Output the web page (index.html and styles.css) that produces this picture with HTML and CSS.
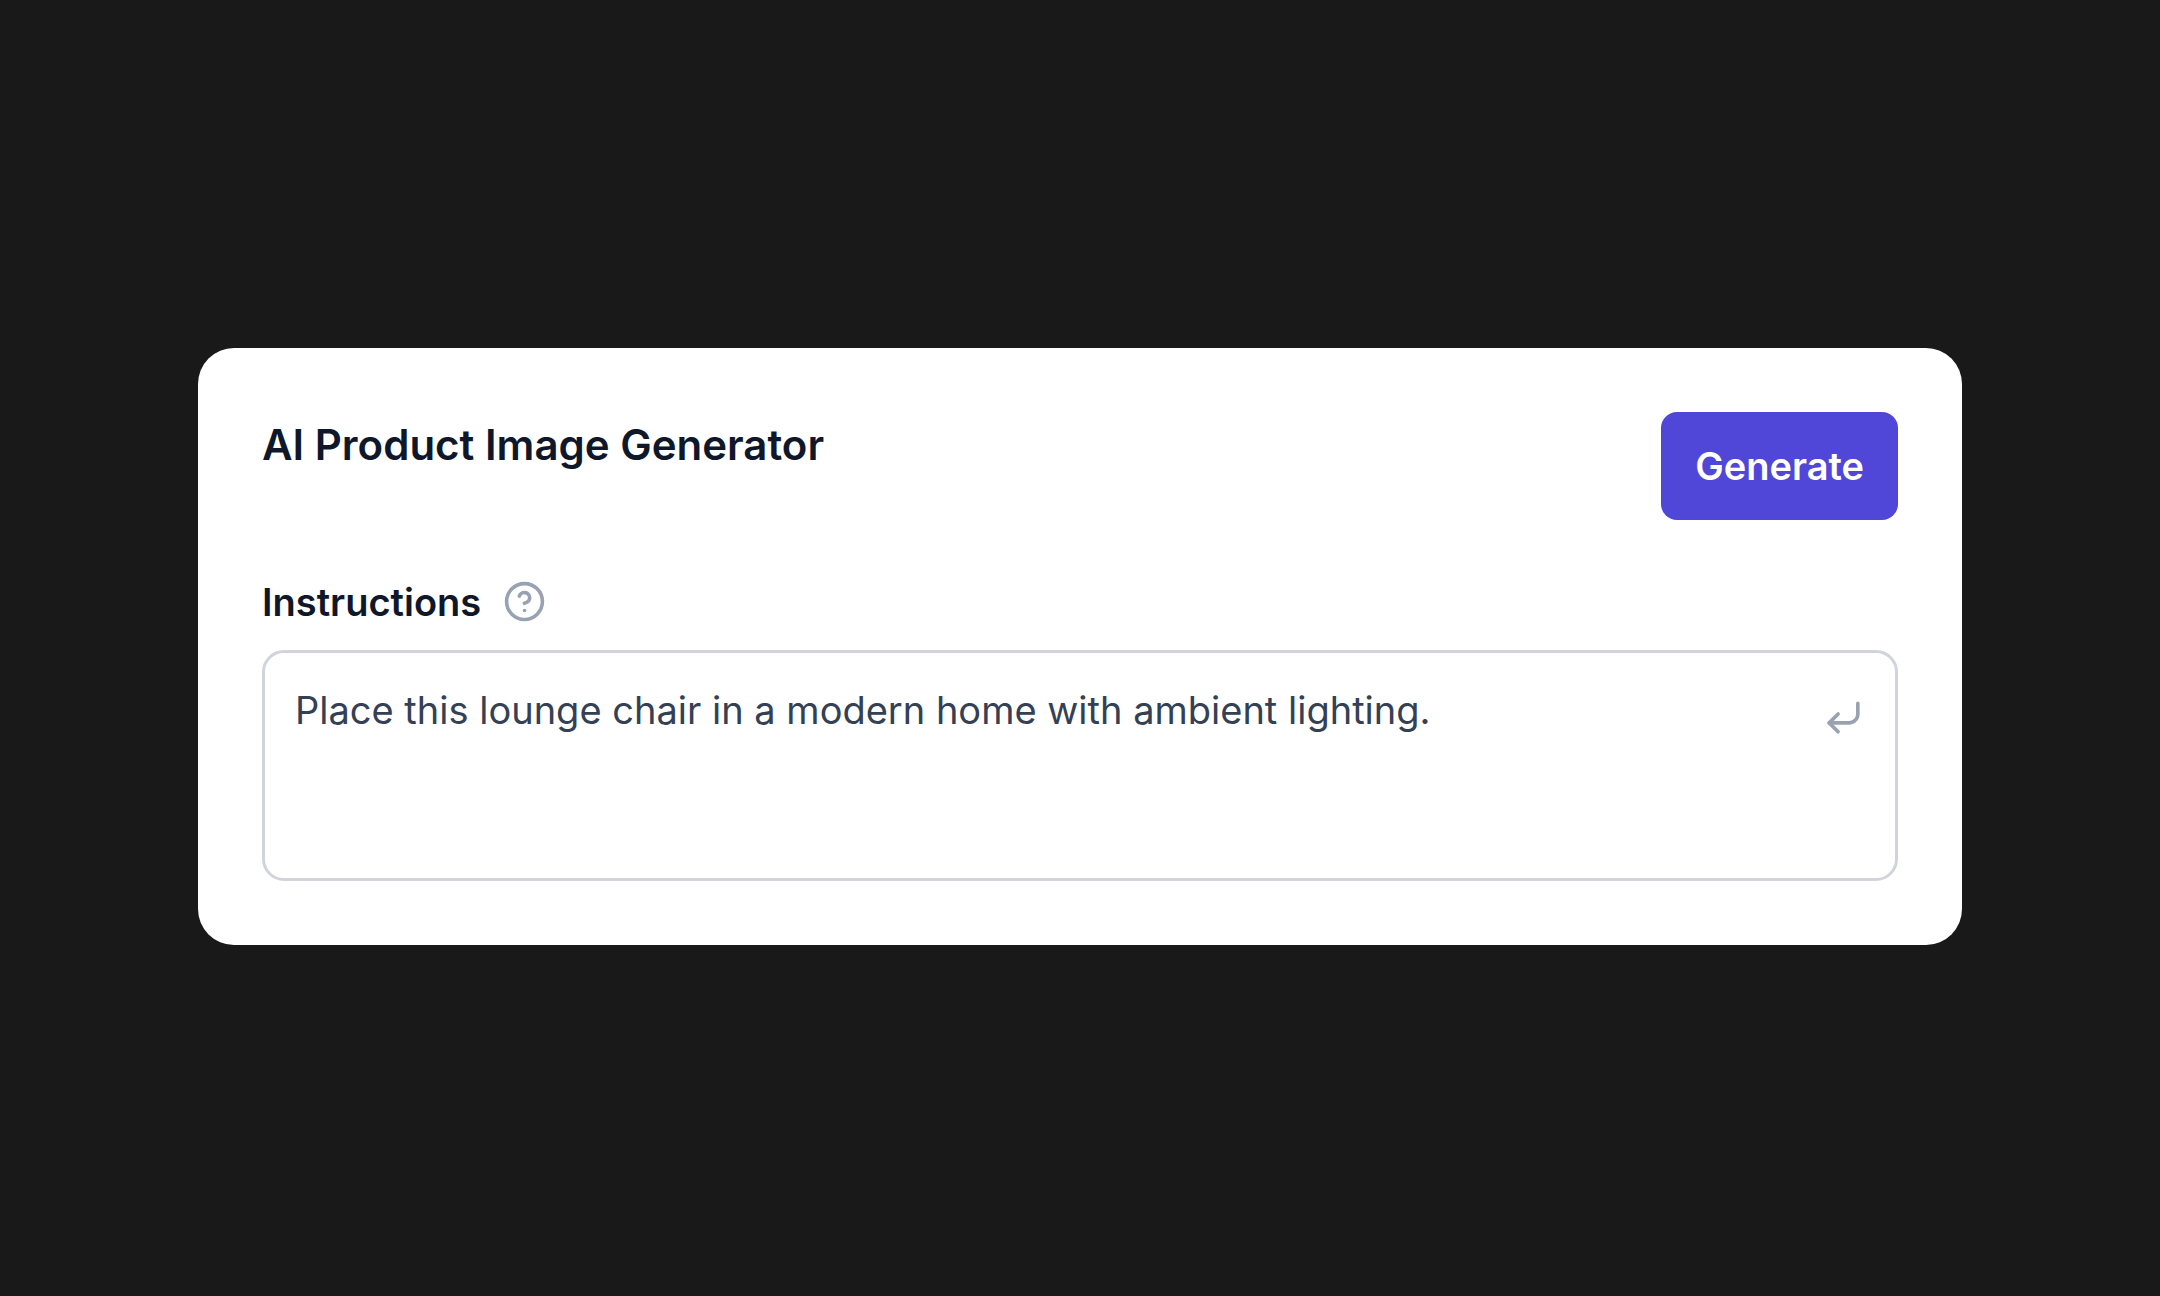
FILE: index.html
```html
<!DOCTYPE html>
<html lang="en">
<head>
    <meta charset="UTF-8">
    <meta name="viewport" content="width=device-width, initial-scale=1.0">
    <title>AI Product Image Generator</title>
    <link rel="stylesheet" href="styles.css">
</head>
<body>
    <form class="card">
        <div class="header">
            <h1>AI Product Image Generator</h1>
            <button type="button" class="generate">Generate</button>
        </div>

        <div class="label-row">
            <label for="instructions">Instructions</label>
            <svg class="help-icon" viewBox="0 0 24 24" aria-hidden="true">
                <circle cx="12" cy="12" r="10"/>
                <path d="M9.09 9a3 3 0 0 1 5.83 1c0 2-3 3-3 3"/>
                <path d="M12 17h.01"/>
            </svg>
        </div>

        <div class="input-box">
            <textarea id="instructions" rows="3" spellcheck="false">Place this lounge chair in a modern home with ambient lighting.</textarea>
            <svg class="enter-icon" viewBox="0 0 24 24" aria-hidden="true">
                <path d="M9 10l-5 5 5 5"/>
                <path d="M20 4v6a5 5 0 0 1-5 5H4"/>
            </svg>
        </div>
    </form>
</body>
</html>
```

FILE: styles.css
```css
*{
    margin: 0;
    padding: 0;
    box-sizing: border-box;
}

body{
    min-height: 100vh;
    padding: 0 198px 4px;
    display: flex;
    align-items: center;
    background-color: #19191a;
    font-family: Inter, "Liberation Sans", sans-serif;
    color: #0f172a;
}

.card{
    flex: 1;
    padding: 64px;
    border-radius: 36px;
    background-color: white;
}

.header{
    display: flex;
    justify-content: space-between;
    align-items: flex-start;
}

h1{
    font-size: 42px;
    line-height: 66px;
    font-weight: 600;
}

.generate{
    padding: 27px 34px;
    border: none;
    border-radius: 16px;
    background-color: #5046d8;
    color: white;
    font-family: inherit;
    font-size: 38px;
    line-height: 54px;
    font-weight: 600;
    cursor: pointer;
}

.label-row{
    display: flex;
    align-items: center;
    gap: 22px;
    margin: 55px 0 21px;
    font-size: 38px;
    line-height: 54px;
    font-weight: 600;
}

svg{
    flex-shrink: 0;
    fill: none;
    stroke: #98a2b3;
    stroke-width: 2;
    stroke-linecap: round;
    stroke-linejoin: round;
}

.help-icon{
    width: 43px;
    height: 43px;
}

.input-box{
    display: flex;
    align-items: flex-start;
    padding: 30px 30px 33px;
    border: 3px solid #d1d5db;
    border-radius: 22px;
}

textarea{
    flex: 1;
    display: block;
    border: none;
    outline: none;
    resize: none;
    background: none;
    font-family: inherit;
    font-size: 38px;
    line-height: 54px;
    color: #344054;
}

.enter-icon{
    width: 43px;
    height: 43px;
    margin-top: 13px;
}
```
